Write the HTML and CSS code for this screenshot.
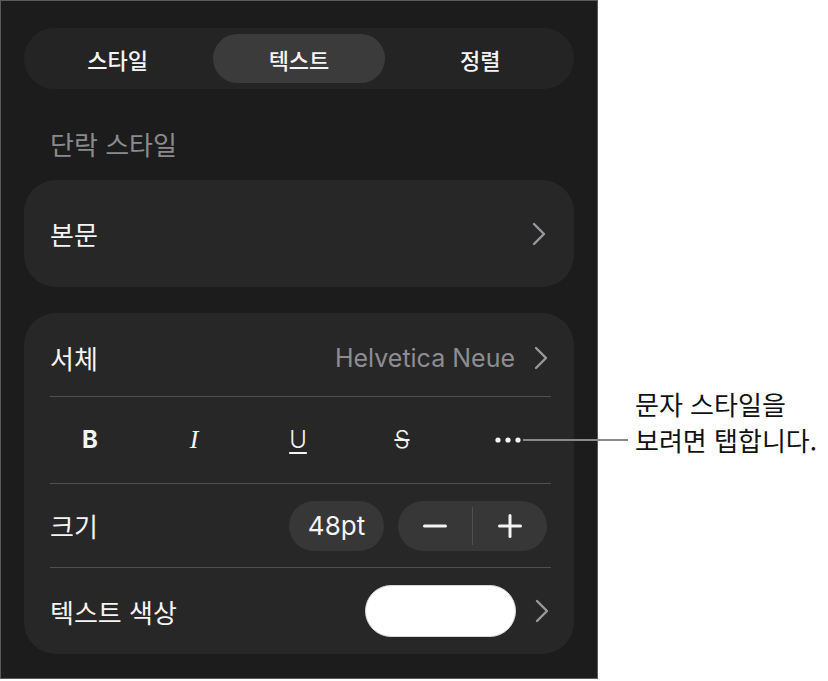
FILE: index.html
```html
<!DOCTYPE html>
<html lang="ko">
<head>
<meta charset="utf-8">
<title>텍스트</title>
<link rel="stylesheet" href="styles.css">
</head>
<body>
<div class="stage">
  <div class="panel">
    <div class="segmented">
      <div class="seg">스타일</div>
      <div class="seg active">텍스트</div>
      <div class="seg">정렬</div>
    </div>
    <div class="section-label">단락 스타일</div>
    <div class="card card-single">
      <span class="row-title">본문</span>
      <svg class="chev" width="14" height="24" viewBox="0 0 14 24"><polyline points="2,2 12,12 2,22" /></svg>
    </div>
    <div class="card card-list">
      <div class="row row-font">
        <span class="row-title">서체</span>
        <span class="row-value">Helvetica Neue</span>
        <svg class="chev" width="14" height="24" viewBox="0 0 14 24"><polyline points="2,2 12,12 2,22" /></svg>
      </div>
      <div class="sep"></div>
      <div class="row row-styles">
        <span class="st st-b">B</span>
        <span class="st st-i">I</span>
        <span class="st st-u">U</span>
        <span class="st st-s">S</span>
        <span class="st st-more"><svg width="26" height="6" viewBox="0 0 26 6"><circle cx="3" cy="3" r="2.6"/><circle cx="13" cy="3" r="2.6"/><circle cx="23" cy="3" r="2.6"/></svg></span>
      </div>
      <div class="sep"></div>
      <div class="row row-size">
        <span class="row-title">크기</span>
        <span class="size-pill">48pt</span>
        <div class="stepper">
          <span class="step"><svg width="24" height="24" viewBox="0 0 24 24"><line x1="1.5" y1="12" x2="22.5" y2="12"/></svg></span>
          <span class="step-div"></span>
          <span class="step"><svg width="24" height="24" viewBox="0 0 24 24"><line x1="1.5" y1="12" x2="22.5" y2="12"/><line x1="12" y1="1.5" x2="12" y2="22.5"/></svg></span>
        </div>
      </div>
      <div class="sep"></div>
      <div class="row row-color">
        <span class="row-title">텍스트 색상</span>
        <span class="swatch"></span>
        <svg class="chev" width="14" height="24" viewBox="0 0 14 24"><polyline points="2,2 12,12 2,22" /></svg>
      </div>
    </div>
  </div>
  <div class="callout-line"></div>
  <div class="callout">문자 스타일을<br>보려면 탭합니다.</div>
</div>
</body>
</html>
```
FILE: styles.css
```css
* { box-sizing: border-box; }
html, body { margin: 0; padding: 0; background: #ffffff; }
body {
  font-family: "Inter", "Noto Sans CJK KR", sans-serif;
  width: 828px;
  height: 681px;
  overflow: hidden;
}
.stage {
  position: relative;
  width: 828px;
  height: 681px;
}
.panel {
  width: 598px;
  height: 679px;
  background: #1c1c1c;
  border: 1px solid #5a5a5a;
  padding: 27px 23px 0 23px;
  color: #f4f4f4;
}
.segmented {
  height: 61px;
  border-radius: 31px;
  background: #242424;
  display: grid;
  grid-template-columns: repeat(3, 1fr);
  gap: 10px;
  padding: 6px 8px;
}
.seg {
  display: flex;
  align-items: center;
  justify-content: center;
  font-size: 22px;
  font-weight: 500;
  color: #f4f4f4;
  border-radius: 25px;
}
.seg.active { background: #3b3b3b; }
.section-label {
  margin: 41px 0 19px 26px;
  line-height: 31px;
  font-size: 26px;
  color: #8b8b8f;
}
.card {
  background: #272727;
  border-radius: 32px;
}
.card-single {
  height: 107px;
  display: flex;
  align-items: center;
  padding: 0 28px 0 26px;
}
.row-title {
  font-size: 26px;
  color: #f4f4f4;
  flex: 1;
}
.chev { flex: none; }
.chev polyline {
  fill: none;
  stroke: #9a9a9e;
  stroke-width: 2.4;
  stroke-linecap: round;
  stroke-linejoin: round;
}
.card-list {
  margin-top: 26px;
  height: 341px;
}
.sep {
  height: 1px;
  margin: 0 23px 0 26px;
  background: #505050;
}
.row {
  display: flex;
  align-items: center;
}
.row-font {
  height: 83px;
  padding: 6px 26px 0 26px;
}
.row-value {
  font-size: 25px;
  color: #8d8d92;
  margin-right: 19px;
}
.row-styles {
  height: 86px;
  display: grid;
  grid-template-columns: repeat(5, 1fr);
  margin: 0 16px 0 14px;
  align-items: center;
  justify-items: center;
}
.st {
  color: #f4f4f4;
  line-height: 30px;
}
.st-b { font-size: 24px; font-weight: 700; }
.st-i { font-family: "Liberation Serif", serif; font-style: italic; font-size: 26px; }
.st-u { font-size: 24px; font-weight: 300; text-decoration: underline; text-decoration-thickness: 2px; text-underline-offset: 4px; }
.st-s { font-size: 24px; font-weight: 300; text-decoration: line-through; text-decoration-thickness: 2px; }
.st-more { display: flex; margin-left: 4px; }
.st-more circle { fill: #f4f4f4; }
.row-size {
  height: 83px;
  padding: 0 27px 0 26px;
}
.size-pill {
  width: 95px;
  height: 50px;
  border-radius: 25px;
  background: #373737;
  font-size: 26px;
  color: #f4f4f4;
  display: flex;
  align-items: center;
  justify-content: center;
  margin-right: 14px;
}
.stepper {
  width: 149px;
  height: 50px;
  border-radius: 25px;
  background: #373737;
  display: flex;
  align-items: center;
}
.step {
  flex: 1;
  display: flex;
  justify-content: center;
}
.step line {
  stroke: #f4f4f4;
  stroke-width: 3;
  stroke-linecap: round;
}
.step-div {
  width: 1px;
  height: 38px;
  background: #505050;
}
.row-color {
  height: 86px;
  padding: 0 25px 0 26px;
}
.swatch {
  width: 151px;
  height: 52px;
  border-radius: 26px;
  background: #ffffff;
  border: 1px solid #d8d8d8;
  margin-right: 19px;
}
.callout-line {
  position: absolute;
  left: 523px;
  top: 439px;
  width: 105px;
  height: 2px;
  background: #8a8a8a;
}
.callout {
  position: absolute;
  left: 635px;
  top: 386px;
  font-family: "Noto Sans CJK KR", sans-serif;
  font-size: 26px;
  line-height: 36px;
  color: #111111;
}
```
